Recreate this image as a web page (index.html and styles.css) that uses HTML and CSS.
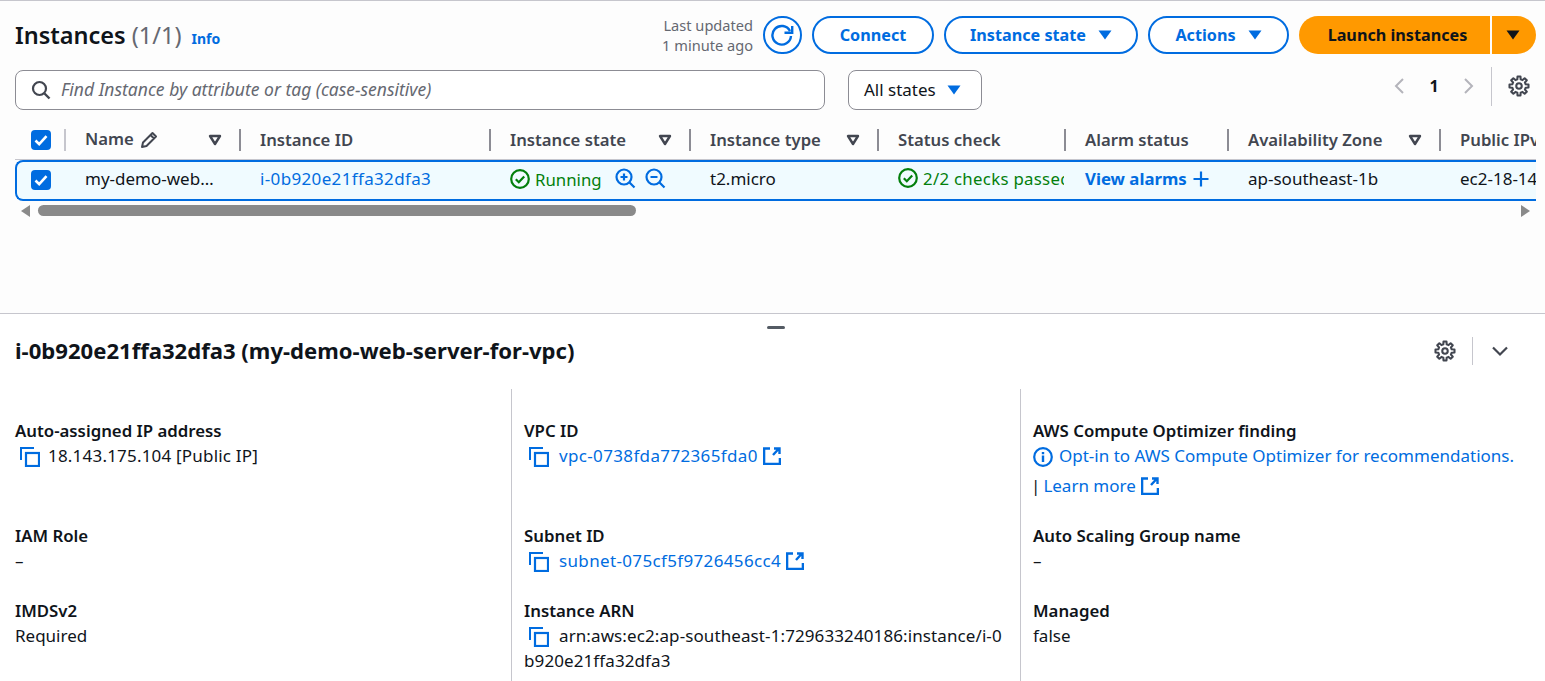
FILE: index.html
```html
<!DOCTYPE html>
<html lang="en">
<head>
    <meta charset="UTF-8">
    <meta name="viewport" content="width=device-width, initial-scale=1.0">
    <title>Instances</title>
    <link rel="stylesheet" href="styles.css">
</head>
<body>
    <svg class="icon-defs" aria-hidden="true">
        <symbol id="i-caret" viewBox="0 0 14 10"><path d="M0.5 0.5h13L7 9.5z" fill="currentColor"/></symbol>
        <symbol id="i-sort" viewBox="0 0 14 12"><path d="M2 2h10L7 10z" fill="none" stroke="currentColor" stroke-width="2.4" stroke-linejoin="round"/></symbol>
        <symbol id="i-copy" viewBox="0 0 20 20"><path d="M1 13V1h13" fill="none" stroke="currentColor" stroke-width="2"/><rect x="6" y="6" width="13" height="13" fill="none" stroke="currentColor" stroke-width="2.2"/></symbol>
        <symbol id="i-ext" viewBox="0 0 18 18"><path d="M7 1.500H1.100v15.400h15.800V11M10 8l6-6.500M11 1.500h5.500V7" fill="none" stroke="currentColor" stroke-width="2.400"/></symbol>
        <symbol id="i-gear" viewBox="0 0 16 16"><path d="M6.79 3.15 6.91 1.09H9.09L9.21 3.15 10.58 3.71 12.11 2.34 13.66 3.89 12.29 5.42 12.85 6.79 14.91 6.91V9.09L12.85 9.21 12.29 10.58 13.66 12.11 12.11 13.66 10.58 12.29 9.21 12.85 9.09 14.91H6.91L6.79 12.85 5.42 12.29 3.89 13.66 2.34 12.11 3.71 10.58 3.15 9.21 1.09 9.09V6.91L3.15 6.79 3.71 5.42 2.34 3.89 3.89 2.34 5.42 3.71Z" fill="none" stroke="currentColor" stroke-width="1.5" stroke-linejoin="round"/><circle cx="8" cy="8" r="2" fill="none" stroke="currentColor" stroke-width="1.5"/></symbol>
        <symbol id="i-check" viewBox="0 0 20 20"><circle cx="10" cy="10" r="8.800" fill="none" stroke="currentColor" stroke-width="2.200"/><path d="M5.800 10.200l3 3 5.400-5.800" fill="none" stroke="currentColor" stroke-width="2.200"/></symbol>
        <symbol id="i-tick" viewBox="0 0 20 20"><path d="M4.500 10.500l3.700 3.700 7.300-8" fill="none" stroke="#fff" stroke-width="2.600"/></symbol>
    </svg>

    <section class="top-panel">
        <div class="title-row">
            <div class="title-left">
                <h1>Instances <span class="count">(1/1)</span></h1>
                <a class="info-link">Info</a>
            </div>
            <div class="actions">
                <div class="updated">Last updated<br>1 minute ago</div>
                <button class="btn btn-round">
                    <svg width="24" height="24" viewBox="0 0 24 24"><path d="M19 8A9.300 9.300 0 1 0 20 13M21.200 3v6.700h-7.700" fill="none" stroke="currentColor" stroke-width="2.400"/></svg>
                </button>
                <button class="btn btn-connect">Connect</button>
                <button class="btn btn-state">Instance state <svg class="caret"><use href="#i-caret"/></svg></button>
                <button class="btn btn-actions">Actions <svg class="caret"><use href="#i-caret"/></svg></button>
                <div class="launch">
                    <button class="launch-main">Launch instances</button>
                    <button class="launch-drop"><svg class="caret"><use href="#i-caret"/></svg></button>
                </div>
            </div>
        </div>

        <div class="filter-row">
            <div class="search">
                <svg width="20" height="20" viewBox="0 0 20 20"><circle cx="8.500" cy="8.500" r="6.500" fill="none" stroke="currentColor" stroke-width="2.200"/><path d="M13.500 13.500l5 5" stroke="currentColor" stroke-width="2.400"/></svg>
                <span>Find Instance by attribute or tag (case-sensitive)</span>
            </div>
            <div class="state-select">All states <svg class="caret"><use href="#i-caret"/></svg></div>
            <div class="pager">
                <svg class="pager-arrow" width="12" height="18" viewBox="0 0 12 18"><path d="M10 2L3 9l7 7" fill="none" stroke="currentColor" stroke-width="2"/></svg>
                <span class="page-num">1</span>
                <svg class="pager-arrow" width="12" height="18" viewBox="0 0 12 18"><path d="M2 2l7 7-7 7" fill="none" stroke="currentColor" stroke-width="2"/></svg>
                <span class="pager-sep"></span>
                <svg class="gear" width="22" height="22"><use href="#i-gear"/></svg>
            </div>
        </div>

        <div class="table">
            <div class="table-row table-head">
                <div class="cell cell-check"><span class="checkbox"><svg width="20" height="20"><use href="#i-tick"/></svg></span></div>
                <div class="cell first-sep">Name
                    <svg class="pencil" width="18" height="18" viewBox="0 0 18 18"><path d="M2 16l1-4.500L12.500 2l3.500 3.500L6.500 15zM10.500 4l3.500 3.500" fill="none" stroke="currentColor" stroke-width="2" stroke-linejoin="round"/></svg>
                    <svg class="sort"><use href="#i-sort"/></svg></div>
                <div class="cell">Instance ID</div>
                <div class="cell">Instance state <svg class="sort"><use href="#i-sort"/></svg></div>
                <div class="cell">Instance type <svg class="sort"><use href="#i-sort"/></svg></div>
                <div class="cell">Status check</div>
                <div class="cell">Alarm status</div>
                <div class="cell">Availability Zone <svg class="sort"><use href="#i-sort"/></svg></div>
                <div class="cell">Public IPv4 DNS</div>
            </div>
            <div class="table-row table-body">
                <div class="cell cell-check"><span class="checkbox"><svg width="20" height="20"><use href="#i-tick"/></svg></span></div>
                <div class="cell">my-demo-web…</div>
                <div class="cell"><a class="link id-text">i-0b920e21ffa32dfa3</a></div>
                <div class="cell">
                    <span class="status status-running"><svg width="20" height="20"><use href="#i-check"/></svg>Running</span>
                    <svg class="zoom-icon zoom-first" width="21" height="21" viewBox="0 0 21 21"><circle cx="9" cy="9" r="7.500" fill="none" stroke="currentColor" stroke-width="2.200"/><path d="M14.500 14.500l5 5M5.500 9h7M9 5.500v7" stroke="currentColor" stroke-width="2.200"/></svg>
                    <svg class="zoom-icon" width="21" height="21" viewBox="0 0 21 21"><circle cx="9" cy="9" r="7.500" fill="none" stroke="currentColor" stroke-width="2.200"/><path d="M14.500 14.500l5 5M5.500 9h7" stroke="currentColor" stroke-width="2.200"/></svg>
                </div>
                <div class="cell">t2.micro</div>
                <div class="cell cell-clip"><span class="status"><svg width="20" height="20"><use href="#i-check"/></svg>2/2 checks passed</span></div>
                <div class="cell"><a class="link link-bold">View alarms</a>
                    <svg class="plus" width="16" height="16" viewBox="0 0 16 16"><path d="M8 0.500v15M0.500 8h15" stroke="currentColor" stroke-width="2.200"/></svg></div>
                <div class="cell">ap-southeast-1b</div>
                <div class="cell">ec2-18-143-175-104.ap-southeast-1</div>
            </div>
        </div>

        <div class="scrollbar">
            <span class="scroll-left"></span>
            <span class="scroll-thumb"></span>
            <span class="scroll-right"></span>
        </div>
    </section>

    <section class="detail-panel">
        <div class="drag-handle"></div>
        <div class="detail-head">
            <h2>i-0b920e21ffa32dfa3 (my-demo-web-server-for-vpc)</h2>
            <div class="detail-tools">
                <svg class="gear" width="22" height="22"><use href="#i-gear"/></svg>
                <span class="tools-sep"></span>
                <svg class="chevron" width="20" height="20" viewBox="0 0 20 20"><path d="M3 6.500l7 7 7-7" fill="none" stroke="currentColor" stroke-width="2.200"/></svg>
            </div>
        </div>

        <div class="detail-grid">
            <div class="detail-cell">
                <div class="label">Auto-assigned IP address</div>
                <div class="value"><svg class="copy copy-first"><use href="#i-copy"/></svg><span class="ip-text">18.143.175.104 [Public IP]</span></div>
            </div>
            <div class="detail-cell">
                <div class="label">VPC ID</div>
                <div class="value"><svg class="copy"><use href="#i-copy"/></svg><a class="link id-text">vpc-0738fda772365fda0</a><svg class="ext"><use href="#i-ext"/></svg></div>
            </div>
            <div class="detail-cell">
                <div class="label">AWS Compute Optimizer finding</div>
                <div class="value link">
                    <svg class="info-icon" width="20" height="20" viewBox="0 0 20 20"><circle cx="10" cy="10" r="8.800" fill="none" stroke="currentColor" stroke-width="2.200"/><path d="M10 8.500v6.500M10 5v2.200" stroke="currentColor" stroke-width="2.400"/></svg>Opt-in to AWS Compute Optimizer for recommendations.
                </div>
                <div class="value learn-more"><span class="pipe">|</span><a class="link">Learn more</a><svg class="ext"><use href="#i-ext"/></svg></div>
            </div>

            <div class="detail-cell">
                <div class="label">IAM Role</div>
                <div class="value">–</div>
            </div>
            <div class="detail-cell">
                <div class="label">Subnet ID</div>
                <div class="value"><svg class="copy"><use href="#i-copy"/></svg><a class="link id-text">subnet-075cf5f9726456cc4</a><svg class="ext"><use href="#i-ext"/></svg></div>
            </div>
            <div class="detail-cell">
                <div class="label">Auto Scaling Group name</div>
                <div class="value">–</div>
            </div>

            <div class="detail-cell">
                <div class="label">IMDSv2</div>
                <div class="value">Required</div>
            </div>
            <div class="detail-cell">
                <div class="label">Instance ARN</div>
                <div class="value arn"><svg class="copy"><use href="#i-copy"/></svg>arn:aws:ec2:ap-southeast-1:729633240186:instance/i-0b920e21ffa32dfa3</div>
            </div>
            <div class="detail-cell">
                <div class="label">Managed</div>
                <div class="value">false</div>
            </div>
        </div>
    </section>
</body>
</html>
```

FILE: styles.css
```css
* {
    margin: 0;
    padding: 0;
    box-sizing: border-box;
}

body {
    font-family: "Noto Sans", sans-serif;
    font-size: 17px;
    line-height: 25px;
    color: #0f141a;
    background: #fff;
    height: 681px;
    overflow: hidden;
}

.icon-defs {
    display: none;
}

.link {
    color: #006ce0;
}

.link-bold {
    font-weight: 700;
    font-size: 16.8px;
}

.id-text {
    letter-spacing: 0.35px;
}

.ip-text {
    letter-spacing: 0.2px;
}

/* top panel */
.top-panel {
    height: 314px;
    background: #fdfdfd;
    border-top: 1px solid #c6c6cd;
    border-bottom: 1px solid #c6c6cd;
    padding-top: 15px;
}

.title-row {
    display: flex;
    justify-content: space-between;
    padding: 0 9px 0 15px;
    height: 38px;
}

.title-left {
    display: flex;
    align-items: center;
    gap: 10px;
}

h1 {
    font-size: 23.5px;
    font-weight: 600;
    line-height: 38px;
}

.count {
    font-weight: 400;
    color: #656871;
}

.info-link {
    color: #006ce0;
    font-size: 14px;
    font-weight: 700;
    margin-top: 7px;
}

.actions {
    display: flex;
    align-items: center;
    gap: 10px;
}

.updated {
    font-size: 14.6px;
    line-height: 20px;
    color: #656871;
    text-align: right;
}

button {
    font-family: inherit;
}

.btn {
    height: 38px;
    border: 2px solid #006ce0;
    border-radius: 19px;
    background: #fff;
    color: #006ce0;
    font-size: 16.2px;
    font-weight: 700;
    display: flex;
    align-items: center;
    justify-content: center;
}

.btn-round {
    width: 39px;
}

.btn-connect {
    width: 122px;
}

.btn-state {
    width: 194px;
}

.btn-actions {
    width: 141px;
}

.caret {
    width: 14px;
    height: 10px;
    margin-left: 12px;
}

.launch {
    display: flex;
    gap: 2px;
    height: 38px;
}

.launch button {
    border: none;
    background: #ff9900;
    color: #0f141a;
    font-size: 16.2px;
    font-weight: 700;
}

.launch-main {
    width: 191px;
    border-radius: 19px 0 0 19px;
    padding-left: 6px;
}

.launch-drop {
    width: 44px;
    border-radius: 0 19px 19px 0;
    display: flex;
    align-items: center;
    justify-content: center;
}

.launch-drop .caret {
    margin: 0 0 0 -3px;
}

.filter-row {
    display: flex;
    align-items: center;
    margin-top: 16px;
    padding-left: 15px;
    height: 40px;
}

.search {
    width: 810px;
    height: 40px;
    border: 1px solid #8c8c94;
    border-radius: 8px;
    background: #fff;
    display: flex;
    align-items: center;
    gap: 10px;
    padding: 0 0 2px 15px;
    color: #656871;
    font-size: 17.5px;
    font-style: italic;
}

.search svg {
    color: #424650;
    margin-top: 2px;
}

.state-select {
    margin-left: 23px;
    width: 134px;
    height: 40px;
    border: 1px solid #8c8c94;
    border-radius: 8px;
    background: #fff;
    display: flex;
    align-items: center;
    padding: 0 0 2px 15px;
}

.state-select .caret {
    color: #006ce0;
    margin: 2px 0 0 11px;
}

.pager {
    margin-left: auto;
    display: flex;
    align-items: center;
    padding-right: 15px;
    margin-top: -8px;
    height: 40px;
}

.pager-arrow {
    color: #b4b4bb;
}

.page-num {
    font-weight: 700;
    font-size: 16px;
    width: 58px;
    text-align: center;
}

.pager-sep {
    width: 1px;
    height: 39px;
    background: #c6c6cd;
    margin: 0 16px;
}

.gear {
    color: #424650;
}

/* instances table */
.table {
    margin: 10px 9px 0 15px;
    overflow: hidden;
}

.table-row {
    display: grid;
    grid-template-columns: 49px 175px 250px 200px 188px 187px 163px 212px 200px;
    white-space: nowrap;
}

.table-head {
    height: 40px;
    font-size: 16.7px;
    font-weight: 600;
    color: #424650;
    border-bottom: 1px solid #c6c6cd;
}

.table-head .cell {
    display: flex;
    align-items: center;
    padding: 0 17px 2px 19px;
}

.table-head .cell + .cell {
    border-left: 2px solid #8c8c94;
    height: 22px;
    margin-top: 9px;
}

.table-head .first-sep {
    padding-bottom: 4px;
}

.table-head .cell-check {
    padding: 0 0 0 16px;
    height: 40px;
}

.table-head .cell + .first-sep {
    border-left-color: #c6c6cd;
}

.checkbox {
    display: block;
    width: 20px;
    height: 20px;
    background: #006ce0;
    border-radius: 4px;
}

.pencil {
    margin: 4px 0 0 6px;
    color: #424650;
    flex: none;
}

.sort {
    width: 14px;
    height: 12px;
    margin: 2px 0 0 auto;
    color: #424650;
    flex: none;
}

.first-sep .sort {
    margin-top: 4px;
}

.table-body {
    height: 41px;
    background: #f0fbff;
    border: 2px solid #006ce0;
    border-right: none;
    border-radius: 8px 0 0 8px;
}

.table-body .cell {
    display: flex;
    align-items: center;
    padding: 0 0 5px 19px;
    overflow: hidden;
}

.table-body .cell-check {
    padding: 0 0 2px 14px;
}

.table-body .cell-clip {
    padding-right: 2px;
}

.status {
    display: inline-flex;
    align-items: center;
    gap: 5px;
    color: #037f0c;
    font-size: 16.8px;
    letter-spacing: 0.3px;
    overflow: hidden;
}

.status-running {
    letter-spacing: 0;
    margin-top: 2px;
}

.status svg {
    flex: none;
}

.zoom-icon {
    color: #006ce0;
    margin-left: 9px;
    flex: none;
}

.zoom-first {
    margin-left: 13px;
}

.plus {
    color: #006ce0;
    margin: 2px 0 0 6px;
}

.scrollbar {
    display: flex;
    align-items: center;
    height: 11px;
    margin: 4px 15px 0 21px;
}

.scroll-left,
.scroll-right {
    width: 0;
    height: 0;
    border-top: 6px solid transparent;
    border-bottom: 6px solid transparent;
}

.scroll-left {
    border-right: 9px solid #8a8a8a;
}

.scroll-right {
    border-left: 9px solid #8a8a8a;
    margin-left: auto;
}

.scroll-thumb {
    width: 598px;
    height: 11px;
    margin-left: 8px;
    background: #8a8a8a;
    border-radius: 6px;
}

/* detail panel */
.detail-panel {
    position: relative;
}

.drag-handle {
    position: absolute;
    left: 767px;
    top: 12px;
    width: 18px;
    height: 3px;
    border-radius: 2px;
    background: #545b64;
}

.detail-head {
    display: flex;
    justify-content: space-between;
    align-items: center;
    height: 75px;
    padding: 0 35px 2px 15px;
}

h2 {
    font-size: 22.1px;
    font-weight: 700;
    line-height: 26px;
    margin-bottom: 2px;
}

.detail-tools {
    display: flex;
    align-items: center;
}

.tools-sep {
    width: 1px;
    height: 28px;
    background: #c6c6cd;
    margin: 0 17px 0 16px;
}

.chevron {
    color: #424650;
}

.detail-grid {
    display: grid;
    grid-template-columns: 511px 509px 1fr;
}

.detail-cell {
    padding: 0 12px 25px 12px;
    border-left: 1px solid #c6c6cd;
}

.detail-cell:nth-child(3n+1) {
    border-left: none;
    padding-left: 15px;
}

.detail-cell:nth-child(-n+3) {
    padding-top: 29px;
}

.label {
    font-size: 16.8px;
    font-weight: 600;
}

.copy {
    width: 20px;
    height: 20px;
    color: #006ce0;
    margin: 0 10px 0 5px;
    vertical-align: -5px;
}

.copy-first {
    margin-right: 8px;
}

.ext {
    width: 18px;
    height: 18px;
    color: #006ce0;
    margin-left: 5px;
    vertical-align: -3px;
}

.info-icon {
    vertical-align: -5px;
    margin-right: 6px;
}

.learn-more {
    margin-top: 5px;
}

.pipe {
    margin: 0 3px 0 -2px;
}

.arn {
    word-break: break-all;
    letter-spacing: 0.1px;
}
```
